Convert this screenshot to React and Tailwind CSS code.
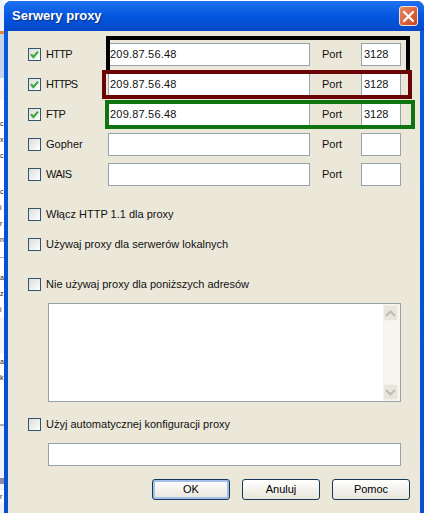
import React from 'react';

const stripItems = [
  { h: 31, bg: 'bg-[#eef3fb]' },
  { h: 3, bg: 'bg-[#e8833a]' },
  { h: 44, bg: 'bg-[#c3d3ea]' },
  { h: 22, bg: 'bg-[#f4f4f4]' },
  { h: 15, bg: 'bg-white' },
  { h: 16, text: 'c' },
  { h: 16, text: 'x' },
  { h: 16, text: 'c' },
  { h: 20 },
  { h: 16, text: 'c' },
  { h: 16, text: 'i' },
  { h: 16, text: 'r' },
  { h: 16, text: 'n' },
  { h: 10 },
  { h: 1, bg: 'bg-[#b0b0b0]' },
  { h: 11 },
  { h: 16, text: 'a' },
  { h: 16, text: 'z' },
  { h: 16, text: 'i' },
  { h: 36, bg: 'bg-[#f4f4f4]' },
  { h: 16, text: 'a' },
  { h: 16, text: 'k' },
  { h: 39 },
  { h: 2, bg: 'bg-[#b0b0b0]' },
  { h: 52, bg: 'bg-[#eef3fb]' },
  { h: 6, bg: 'bg-[#8a8aa8]' },
  { h: 6, bg: 'bg-[#eef3fb]' },
  { h: 13, text: 'r' },
  { h: 10, bg: 'bg-[#eef3fb]' },
];

const protocols = [
  { name: 'HTTP', value: '209.87.56.48', port: '3128', checked: true, labelClass: 'tracking-[-0.7px]' },
  { name: 'HTTPS', value: '209.87.56.48', port: '3128', checked: true, labelClass: 'tracking-[-1px]' },
  { name: 'FTP', value: '209.87.56.48', port: '3128', checked: true, labelClass: 'tracking-[-0.5px]' },
  { name: 'Gopher', value: '', port: '', checked: false, labelClass: '' },
  { name: 'WAIS', value: '', port: '', checked: false, labelClass: 'tracking-[-0.5px]' },
];

const Checkbox = ({ checked }) => (
  <span className="flex items-center justify-center w-[13px] h-[13px] shrink-0 border border-[#33566e] bg-linear-to-br from-[#dcdcd7] to-white">
    {checked && (
      <svg width="11" height="11" viewBox="0 0 11 11">
        <path d="M2 5.2 L4.4 8 L9 2.6" fill="none" stroke="#3fa83f" strokeWidth="2.2" />
      </svg>
    )}
  </span>
);

const CheckRow = ({ checked, label, className }) => (
  <div className={`flex items-center gap-[5px] h-[16px] ${className}`}>
    <Checkbox checked={checked} />
    <span>{label}</span>
  </div>
);

const Field = ({ value, className }) => (
  <div className={`h-[23px] border border-[#96a3ab] bg-white flex items-center ${className}`}>{value}</div>
);

const ArrowButton = ({ down }) => (
  <div className="flex items-center justify-center w-[15px] h-[16px] bg-[#e6e6dc] border border-[#f2f2ea]">
    <svg width="11" height="7" viewBox="0 0 11 7">
      <path d={down ? 'M1 1 L5.5 5.5 L10 1' : 'M1 6 L5.5 1.5 L10 6'} fill="none" stroke="#bdbdb2" strokeWidth="2" />
    </svg>
  </div>
);

const XpButton = ({ label, focused }) => (
  <button className={`w-[78px] h-[21px] rounded-[3px] border border-[#17375a] bg-linear-to-b from-white to-[#e8e5da] text-black ${focused ? 'shadow-[inset_0_0_0_2px_#a3c0e8]' : ''}`}>
    {label}
  </button>
);

const App = () => {
  return (
    <div className="relative flex w-[424px] h-[513px] overflow-hidden bg-white text-[11px] text-[#111] font-['Liberation_Sans',sans-serif]">
      {/* what is left of the window behind the dialog */}
      <div className="flex flex-col w-[4px] overflow-hidden text-[7px] leading-none">
        {stripItems.map((item, i) => (
          <div key={i} style={{ height: item.h }} className={`flex items-center shrink-0 ${item.bg || ''}`}>
            {item.text}
          </div>
        ))}
      </div>

      <div className="flex flex-col flex-1 mt-[1px] rounded-t-[7px] bg-linear-to-b from-[#0a5be0] via-[#0351d8] to-[#0a4fd0]">
        <div className="flex items-center justify-between h-[30px] shrink-0 pl-[8px] pr-[6px] bg-linear-to-b from-[#1f72ee] via-[#0556e0] to-[#0349c8] rounded-t-[7px]">
          <span className="text-white font-bold text-[13px] [text-shadow:1px_1px_1px_#0a2f80]">Serwery proxy</span>
          <div className="flex items-center justify-center w-[19px] h-[20px] rounded-[3px] border border-[#f0e0d8] bg-linear-to-br from-[#e98a62] to-[#c8421c]">
            <svg width="13" height="13" viewBox="0 0 13 13">
              <path d="M2 2 L11 11 M11 2 L2 11" stroke="#fff" strokeWidth="2.2" strokeLinecap="round" />
            </svg>
          </div>
        </div>

        <div className="flex flex-col flex-1 mx-[4px] bg-[#ebe8da] pl-[20px] pr-[19px] pt-[12px]">
          <div className="flex flex-col gap-[7px]">
            {protocols.map((p) => (
              <div key={p.name} className="flex items-center">
                <div className="flex items-center gap-[5px] w-[80px]">
                  <Checkbox checked={p.checked} />
                  <span className={p.labelClass}>{p.name}</span>
                </div>
                <Field value={p.value} className="w-[202px] pl-[1px] tracking-[0.2px]" />
                <span className="ml-[12px] w-[39px]">Port</span>
                <Field value={p.port} className="w-[40px] pl-[2px]" />
              </div>
            ))}
          </div>

          <CheckRow label="Włącz HTTP 1.1 dla proxy" className="mt-[20px]" />
          <CheckRow label="Używaj proxy dla serwerów lokalnych" className="mt-[14px]" />
          <CheckRow label="Nie używaj proxy dla poniższych adresów" className="mt-[24px]" />

          <div className="flex justify-between h-[99px] ml-[20px] mt-[11px] border border-[#96a3ab] bg-white">
            <div />
            <div className="flex flex-col justify-between w-[17px] bg-[#f6f5ee] py-[1px]">
              <ArrowButton />
              <ArrowButton down />
            </div>
          </div>

          <CheckRow label="Użyj automatycznej konfiguracji proxy" className="mt-[14px]" />
          <Field value="" className="ml-[20px] mt-[11px]" />

          <div className="flex justify-end gap-[12px] mt-[13px] -mr-[9px]">
            <XpButton label="OK" focused />
            <XpButton label="Anuluj" />
            <XpButton label="Pomoc" />
          </div>
        </div>
      </div>

      {/* hand drawn marks over the screenshot */}
      <div className="absolute left-[106px] top-[36px] w-[304px] h-[38px] border-4 border-black" />
      <div className="absolute left-[102px] top-[70px] w-[310px] h-[29px] border-4 border-[#6b0404]" />
      <div className="absolute left-[105px] top-[100px] w-[310px] h-[29px] border-4 border-[#0f740f]" />
    </div>
  );
};

export default App;
